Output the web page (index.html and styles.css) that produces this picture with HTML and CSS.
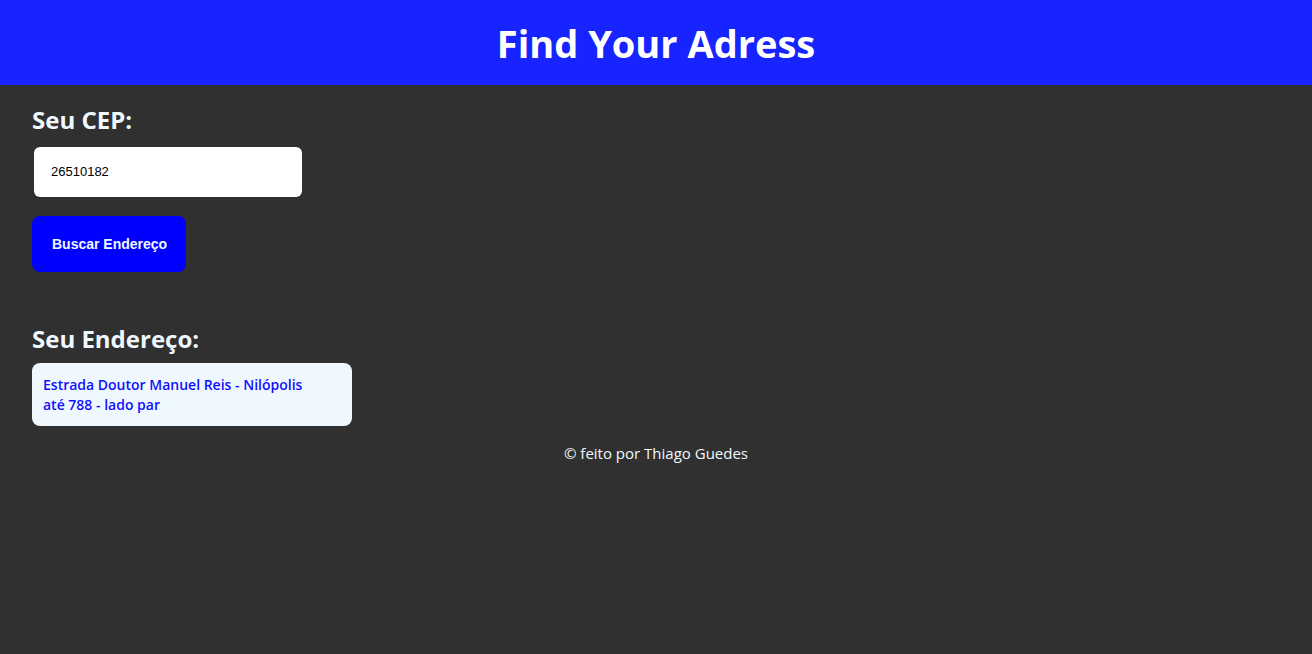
FILE: index.html
```html
<!DOCTYPE html>
<html lang="pt-BR">
<head>
  <meta charset="utf-8">
  <meta name="viewport" content="width=device-width, initial-scale=1">
  <title>Find Your Adress</title>
  <link rel="stylesheet" href="styles.css">
</head>
<body>
  <header class="header">
    <h1 class="title">Find Your Adress</h1>
  </header>
  <main class="content">
    <form class="search">
      <label class="heading" for="cep">Seu CEP:</label>
      <input class="cep" id="cep" type="text" value="26510182">
      <button class="submit" type="button">Buscar Endereço</button>
    </form>
    <section class="result">
      <h2 class="heading">Seu Endereço:</h2>
      <p class="address">Estrada Doutor Manuel Reis - Nilópolis<br>até 788 - lado par</p>
    </section>
  </main>
  <footer class="footer">© feito por Thiago Guedes</footer>
</body>
</html>
```

FILE: styles.css
```css
* {
  box-sizing: border-box;
}

body {
  margin: 0;
  min-height: 100vh;
  background: #303030;
  color: aliceblue;
  font-family: "Segoe UI", "Open Sans", "Noto Sans", sans-serif;
}

.header {
  padding: 17px 16px 16px;
  background: #1724ff;
  text-align: center;
}

.title {
  margin: 0;
  color: white;
  font-size: 38px;
  line-height: 52px;
}

.content {
  padding: 17px 32px 0;
}

.search {
  display: flex;
  flex-direction: column;
  align-items: flex-start;
}

.heading {
  margin: 0;
  font-size: 24px;
  font-weight: 700;
  line-height: 36px;
}

.cep {
  width: 268px;
  max-width: 100%;
  height: 50px;
  margin: 9px 2px 19px;
  padding: 0 17px 2px;
  border: 0;
  border-radius: 6px;
  background: white;
  color: black;
  font: 13px "Liberation Sans", Arial, sans-serif;
}

.submit {
  height: 56px;
  padding: 0 19px 0 20px;
  border: 0;
  border-radius: 8px;
  background: blue;
  color: aliceblue;
  font: bold 14px "Liberation Sans", Arial, sans-serif;
}

.result {
  margin-top: 49px;
}

.address {
  width: 320px;
  max-width: 100%;
  margin: 6px 0 0;
  padding: 12px 11px 11px;
  border-radius: 8px;
  background: aliceblue;
  color: #1010ff;
  font-size: 14px;
  font-weight: 600;
  line-height: 20px;
}

.footer {
  padding: 15px 16px;
  font-size: 15px;
  line-height: 24px;
  text-align: center;
}
```
